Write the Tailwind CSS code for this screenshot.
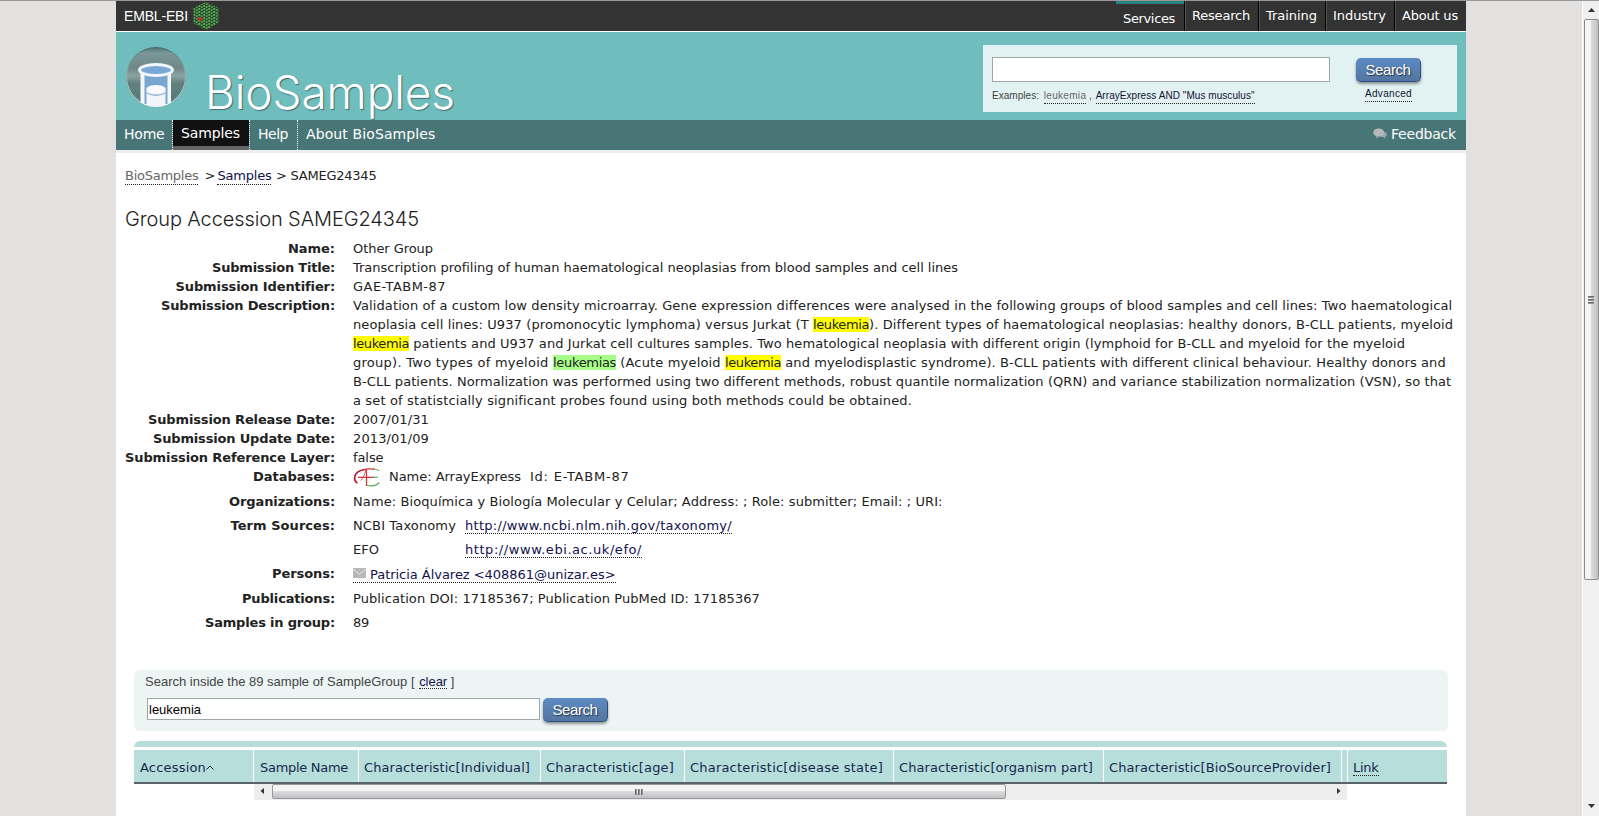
<!DOCTYPE html>
<html lang="en">
<head>
<meta charset="utf-8">
<title>Group Accession SAMEG24345 - BioSamples</title>
<script src="https://cdn.jsdelivr.net/npm/@tailwindcss/browser@4"></script>
</head>
<body class="h-[816px] overflow-hidden bg-[#e2e1df] font-['DejaVu_Sans',sans-serif] text-[13px] leading-[19px] text-[#222]">
<div class="flex h-[816px] border-t border-[#999]">
  <div class="w-[116px] shrink-0"></div>

  <main class="flex h-full w-[1350px] shrink-0 flex-col bg-white whitespace-nowrap">
    <!-- Global bar -->
    <div class="flex h-[30px] shrink-0 justify-between bg-[#333] text-white">
      <div class="flex items-center pl-2">
        <span class="font-['Liberation_Sans',sans-serif] text-[14px]" data-w="64">EMBL-EBI</span>
        <svg class="ml-[5px]" width="26" height="28" viewBox="0 0 26 28">
          <defs><pattern id="dots" width="5" height="3" patternUnits="userSpaceOnUse"><rect width="5" height="3" fill="#2b4a2e"/><circle cx="1.250" cy="0.9" r="1.050" fill="#5cae55"/><circle cx="3.750" cy="2.100" r="1.050" fill="#4f9f4b"/></pattern></defs>
          <path d="M13 0L25.500 6V21L13 28L0.500 21V6Z" fill="url(#dots)"/>
          <circle cx="7.500" cy="17" r="2" fill="#c22a20"/>
        </svg>
      </div>
      <nav class="flex">
        <a class="h-full w-[68px] border-t-[3px] border-[#2b8080] pt-[5px] pr-[2px] text-center"><span data-w="52">Services</span></a>
        <a class="w-[74px] border-l border-black pt-[5px] pr-px text-center shadow-[inset_1px_0_#555]"><span data-w="58">Research</span></a>
        <a class="w-[67px] border-l border-black pt-[5px] pr-px text-center shadow-[inset_1px_0_#555]"><span data-w="51">Training</span></a>
        <a class="w-[69px] border-l border-black pt-[5px] pr-px text-center shadow-[inset_1px_0_#555]"><span data-w="53">Industry</span></a>
        <a class="w-[72px] border-l border-black pt-[5px] pr-px text-center shadow-[inset_1px_0_#555]"><span data-w="56">About us</span></a>
      </nav>
    </div>

    <!-- Masthead -->
    <header class="mt-px flex h-[88px] shrink-0 bg-[#70bdbd]">
      <svg class="mt-[15px] ml-[10px] shrink-0" width="60" height="60" viewBox="0 0 60 60">
        <defs>
          <linearGradient id="disc" x1="0" y1="0" x2="0" y2="1"><stop offset="0" stop-color="#487070"/><stop offset=".1" stop-color="#7b9797"/><stop offset=".35" stop-color="#6f8787"/><stop offset=".48" stop-color="#8ca3a3"/><stop offset=".6" stop-color="#648080"/><stop offset="1" stop-color="#527777"/></linearGradient>
          <linearGradient id="rim" x1="0" y1="0" x2="0" y2="1"><stop offset="0" stop-color="#446c6c"/><stop offset=".4" stop-color="#8aa8a8"/><stop offset="1" stop-color="#e2eeee"/></linearGradient>
          <clipPath id="round"><circle cx="30" cy="30" r="30"/></clipPath>
        </defs>
        <g clip-path="url(#round)">
          <circle cx="30" cy="30" r="30" fill="url(#disc)"/>
          <circle cx="30" cy="30" r="29.500" fill="none" stroke="url(#rim)"/>
          <path d="M14.500 24H45V58H14.500Z" fill="#f2f7fc"/>
          <path d="M18.500 26H41.500V57H18.500Z" fill="#79a6cf"/>
          <ellipse cx="30" cy="23" rx="16.500" ry="5.500" fill="#79a8d8" stroke="#f2f7fc" stroke-width="2.800"/>
          <path d="M20.500 42H39.500V60H20.500Z" fill="#f1f4f8"/>
          <path d="M20.500 46Q30 50.500 39.500 46" fill="none" stroke="#8fb3da" stroke-width="1.300"/>
          <ellipse cx="30" cy="42" rx="9.800" ry="4" fill="#f8fafc"/>
        </g>
      </svg>
      <h1 class="mt-[31px] ml-[19px] font-['Inter',sans-serif] text-[46px] leading-[58px] font-light text-white [text-shadow:1px_1px_1px_#3c6c6c]"><span data-w="250">BioSamples</span></h1>
      <form class="mt-[13px] mr-[9px] ml-auto flex h-[67px] w-[474px] bg-[#e2f2f2] pl-[9px] font-['Liberation_Sans',sans-serif]">
        <div class="w-[338px]">
          <div class="mt-3 h-[25px] border border-[#9ea8a8] bg-white"></div>
          <p class="mt-[7px] text-[10px] leading-[14px] text-[#444]"><span data-w="47">Examples:</span> <a class="ml-[2px] inline-block border-b border-dotted border-[#222] text-[#666]"><span data-w="42.500">leukemia</span></a> , <a class="ml-px inline-block border-b border-dotted border-[#222] text-[#113]"><span data-w="159">ArrayExpress AND "Mus musculus"</span></a></p>
        </div>
        <div class="ml-[26px] flex w-[65px] flex-col items-center">
          <button class="mt-[13px] h-[24px] w-full rounded-[5px] border-r border-b border-[#2d4f80] bg-linear-to-b from-[#5c8bc4] to-[#54759f] text-[15px] leading-[22px] text-white shadow-[0_2px_3px_rgba(0,0,0,.4)] [text-shadow:1px_1px_1px_#234]"><span data-w="45">Search</span></button>
          <a class="mt-[5px] border-b border-dotted border-[#222] text-[10px] leading-[14px] text-[#113]"><span data-w="47">Advanced</span></a>
        </div>
      </form>
    </header>

    <!-- Section navigation -->
    <nav class="flex h-[33px] shrink-0 border-b-[3px] border-[#eee] bg-[#487575] text-[14px] text-white">
      <a class="w-[57px] border-r border-dotted border-white pt-[5px] pl-2"><span data-w="40.500">Home</span></a>
      <a class="w-[77px] border-r border-dotted border-white"><span class="block h-[26px] bg-[#111] pt-1 pl-2"><span data-w="59">Samples</span></span><span class="block h-1 bg-[#666]"></span></a>
      <a class="w-[48px] border-r border-dotted border-white pt-[5px] pl-2"><span data-w="30">Help</span></a>
      <a class="pt-[5px] pl-2"><span data-w="129.500">About BioSamples</span></a>
      <a class="mr-[10px] ml-auto flex items-start pt-[5px]">
        <svg class="mt-[3px] mr-[4px]" width="14" height="12" viewBox="0 0 14 12"><path d="M8.500 4H12.500Q14 5 13.800 7Q13.500 8.500 12 9L12.500 11L10 9H7Z" fill="#93aaaa"/><path d="M5.500 0.500C8.500 0.500 11 2 11 4.500S8.500 8.300 5.800 8.300L3.500 10.500V8C1.500 7.500 0.300 6.200 0.300 4.500C0.300 2 2.500 0.500 5.500 0.500Z" fill="#b5b8b8"/></svg>
        <span data-w="65">Feedback</span></a>
    </nav>

    <section class="pl-[9px]">
      <p class="mt-[14px] flex h-[20px] items-start leading-[17px]">
        <a class="border-b border-dotted border-[#222] text-[#666]"><span data-w="73.500">BioSamples</span></a><span class="ml-[4px] w-[15px] text-center">&gt;</span><a class="border-b border-dotted border-[#222] text-[#11114d]"><span data-w="54">Samples</span></a><span class="w-[19px] pl-px text-center">&gt;</span><span data-w="86">SAMEG24345</span>
      </p>
      <h2 class="mt-[18px] h-[34px] font-['Inter',sans-serif] text-[20px] leading-[28px] font-light text-[#222]"><span data-w="294">Group Accession SAMEG24345</span></h2>

      <dl class="grid grid-cols-[210px_1fr] gap-x-[18px] [&_dt]:text-right [&_dt]:font-bold">
        <dt><span data-w="47">Name:</span></dt><dd><span data-w="80">Other Group</span></dd>
        <dt><span data-w="123">Submission Title:</span></dt><dd><span data-w="605">Transcription profiling of human haematological neoplasias from blood samples and cell lines</span></dd>
        <dt><span data-w="159">Submission Identifier:</span></dt><dd><span data-w="93">GAE-TABM-87</span></dd>
        <dt><span data-w="174">Submission Description:</span></dt>
        <dd class="[&_mark]:bg-[#ff0] [&_mark]:text-inherit">
          <div><span data-w="1099">Validation of a custom low density microarray. Gene expression differences were analysed in the following groups of blood samples and cell lines: Two haematological</span></div>
          <div><span data-w="460">neoplasia cell lines: U937 (promonocytic lymphoma) versus Jurkat (T </span><mark data-w="56">leukemia</mark><span data-w="584">). Different types of haematological neoplasias: healthy donors, B-CLL patients, myeloid</span></div>
          <div><mark data-w="56">leukemia</mark><span data-w="996"> patients and U937 and Jurkat cell cultures samples. Two hematological neoplasia with different origin (lymphoid for B-CLL and myeloid for the myeloid</span></div>
          <div><span data-w="200">group). Two types of myeloid </span><mark class="!bg-[#a6ff88]" data-w="63">leukemias</mark><span data-w="109"> (Acute myeloid </span><mark data-w="56">leukemia</mark><span data-w="664.500"> and myelodisplastic syndrome). B-CLL patients with different clinical behaviour. Healthy donors and</span></div>
          <div><span data-w="1098">B-CLL patients. Normalization was performed using two different methods, robust quantile normalization (QRN) and variance stabilization normalization (VSN), so that</span></div>
          <div><span data-w="559">a set of statistcially significant probes found using both methods could be obtained.</span></div>
        </dd>
        <dt><span data-w="187">Submission Release Date:</span></dt><dd><span data-w="76">2007/01/31</span></dd>
        <dt><span data-w="182">Submission Update Date:</span></dt><dd><span data-w="76">2013/01/09</span></dd>
        <dt><span data-w="210">Submission Reference Layer:</span></dt><dd><span data-w="30.500">false</span></dd>
        <dt class="h-[25px]"><span data-w="82">Databases:</span></dt>
        <dd class="flex h-[25px] items-start">
          <svg class="mt-px mr-[9px]" width="27" height="19" viewBox="0 0 27 19" fill="none"><path d="M12 1.500C6 2 1.800 5.500 1.600 9.500C1.500 12 2.500 14 4.500 15" stroke="#b5122a" stroke-width="1.700"/><path d="M11 1.500C15 .5 19 .9 22 1.200M5 9.300H22M13.500 1V18" stroke="#e03038" stroke-width="1.200"/><path d="M8 12.500C10 10 12 6 13 2" stroke="#e03038" stroke-width=".8"/><path d="M19 1C22 1 24 1.500 26.500 2.500M14 17.500C19 18.500 24 17 26.500 14.500M19 9.300H25" stroke="#58a860" stroke-width="1.100"/></svg>
          <span data-w="132">Name: ArrayExpress</span><span class="ml-[9px]" data-w="99.500">Id: E-TABM-87</span>
        </dd>
        <dt class="h-6"><span data-w="106">Organizations:</span></dt><dd><span data-w="589.500">Name: Bioquímica y Biología Molecular y Celular; Address: ; Role: submitter; Email: ; URI:</span></dd>
        <dt class="h-6"><span data-w="104.500">Term Sources:</span></dt><dd class="flex items-start"><span class="w-[112px]"><span data-w="103">NCBI Taxonomy</span></span><a class="h-[18px] border-b border-dotted border-[#222] text-[#11114d]"><span data-w="267">http://www.ncbi.nlm.nih.gov/taxonomy/</span></a></dd>
        <dt class="h-6"></dt><dd class="flex items-start"><span class="w-[112px]"><span data-w="26">EFO</span></span><a class="h-[18px] border-b border-dotted border-[#222] text-[#11114d]"><span data-w="177">http://www.ebi.ac.uk/efo/</span></a></dd>
        <dt class="h-[25px]"><span data-w="63">Persons:</span></dt>
        <dd class="flex items-start"><a class="flex h-[19px] items-start border-b border-dotted border-[#222] pt-px text-[#11114d]"><svg class="mt-[3px] mr-1" width="13" height="10" viewBox="0 0 13 10"><rect width="13" height="10" fill="#b8b8b8"/><path d="M0 1L6.500 6L13 1" fill="none" stroke="#e6e6e6"/></svg><span data-w="245.500">Patricia Álvarez &lt;408861@unizar.es&gt;</span></a></dd>
        <dt class="h-6"><span data-w="93">Publications:</span></dt><dd><span data-w="407">Publication DOI: 17185367; Publication PubMed ID: 17185367</span></dd>
        <dt class="h-6"><span data-w="130">Samples in group:</span></dt><dd><span data-w="16">89</span></dd>
      </dl>
    </section>

    <!-- Sample filter -->
    <section class="mt-[33px] mr-[18px] ml-[18px] h-[61px] shrink-0 rounded-md bg-[#ecf5f4] pl-[11px] font-['Liberation_Sans',sans-serif] text-[#444]">
      <p class="pt-[2px]"><span data-w="269.500">Search inside the 89 sample of SampleGroup [</span> <a class="ml-px inline-block h-[17px] border-b border-dotted border-[#222] text-[#11114d]"><span data-w="28">clear</span></a> ]</p>
      <div class="flex items-start pl-[2px]">
        <div class="mt-[7px] h-[22px] w-[393px] border border-[#9ea8a8] bg-white pl-px leading-[21px] text-black"><span data-w="52">leukemia</span></div>
        <button class="mt-[7px] ml-[3px] h-[24px] w-[65px] rounded-[5px] border-r border-b border-[#2d4f80] bg-linear-to-b from-[#5c8bc4] to-[#54759f] text-[15px] leading-[22px] text-white shadow-[0_2px_3px_rgba(0,0,0,.4)] [text-shadow:1px_1px_1px_#234]"><span data-w="45">Search</span></button>
      </div>
    </section>

    <!-- Samples table -->
    <section class="mt-[10px] ml-[18px] w-[1313px] shrink-0 text-[#15294d]">
      <div class="h-[6px] rounded-t-md bg-[#b7dedb]"></div>
      <div class="mt-[3px] flex h-[34px] border-b-2 border-[#5a6366] bg-[#b7dedb] leading-[35px] [&>div]:border-white [&>div]:pl-[5px]">
        <div class="flex w-[119px] items-start"><span class="pl-px" data-w="67">Accession</span><svg class="mt-[15px]" width="8" height="5" viewBox="0 0 8 5"><path d="M0.500 4.500L4 1L7.500 4.500" fill="none" stroke="#15294d"/></svg></div>
        <div class="w-[105px] border-l"><span class="pl-px" data-w="89">Sample Name</span></div>
        <div class="w-[182px] border-l"><span data-w="166">Characteristic[Individual]</span></div>
        <div class="w-[144px] border-l"><span data-w="128">Characteristic[age]</span></div>
        <div class="w-[209px] border-l"><span data-w="193">Characteristic[disease state]</span></div>
        <div class="w-[210px] border-l"><span data-w="194">Characteristic[organism part]</span></div>
        <div class="w-[238px] border-l"><span data-w="222">Characteristic[BioSourceProvider]</span></div>
        <div class="w-[6px] border-l"></div>
        <div class="flex flex-1 items-start border-l"><a class="mt-[8px] h-[18px] border-b border-dotted border-[#222] leading-[19px]"><span data-w="25.500">Link</span></a></div>
      </div>
      <div class="ml-[120px] flex h-4 w-[1093px] items-start bg-[#ededed]">
        <svg class="w-[18px]" width="18" height="16"><path d="M10 4V10L6.500 7Z" fill="#333"/></svg>
        <div class="flex h-[15px] w-[734px] items-center justify-center gap-px rounded-[2px] border border-[#999] bg-linear-to-b from-[#f4f4f4] from-45% via-[#dcdcde] via-50% to-[#c0c0c4]">
          <i class="h-[6px] w-[2px] bg-linear-to-r from-[#555] to-[#aaa]"></i><i class="h-[6px] w-[2px] bg-linear-to-r from-[#555] to-[#aaa]"></i><i class="h-[6px] w-[2px] bg-linear-to-r from-[#555] to-[#aaa]"></i>
        </div>
        <svg class="ml-auto" width="14" height="16"><path d="M4 4V10L7.500 7Z" fill="#333"/></svg>
      </div>
    </section>
  </main>

  <!-- Window scrollbar -->
  <div class="ml-auto flex w-[17px] flex-col items-center border-l border-[#fafafa] bg-[#f0f0f0]">
    <svg class="h-[18px]" width="15" height="18"><path d="M4 11H11L7.500 7Z" fill="#333"/></svg>
    <div class="flex h-[561px] w-[15px] flex-col items-center justify-center gap-px rounded-[2px] border border-[#8c8c8c] bg-linear-to-r from-[#f6f6f6] from-40% via-[#dcdcde] via-50% to-[#c0c0c4]">
      <i class="h-[2px] w-[6px] bg-linear-to-b from-[#555] to-[#aaa]"></i><i class="h-[2px] w-[6px] bg-linear-to-b from-[#555] to-[#aaa]"></i><i class="h-[2px] w-[6px] bg-linear-to-b from-[#555] to-[#aaa]"></i>
    </div>
    <svg class="mt-auto mb-[2px]" width="15" height="14"><path d="M4 4H11L7.500 8Z" fill="#333"/></svg>
  </div>
</div>
<script>
  function fitText() {
    var runs = Array.from(document.querySelectorAll('[data-w]'));
    runs.forEach(function (el) { el.style.letterSpacing = '0px'; });
    var gaps = runs.map(function (el) {
      return (parseFloat(el.dataset.w) - el.getBoundingClientRect().width) / el.textContent.length;
    });
    runs.forEach(function (el, i) { el.style.letterSpacing = gaps[i].toFixed(3) + 'px'; });
  }
  window.addEventListener('load', fitText);
  new ResizeObserver(fitText).observe(document.querySelector('main'));
</script>
</body>
</html>
